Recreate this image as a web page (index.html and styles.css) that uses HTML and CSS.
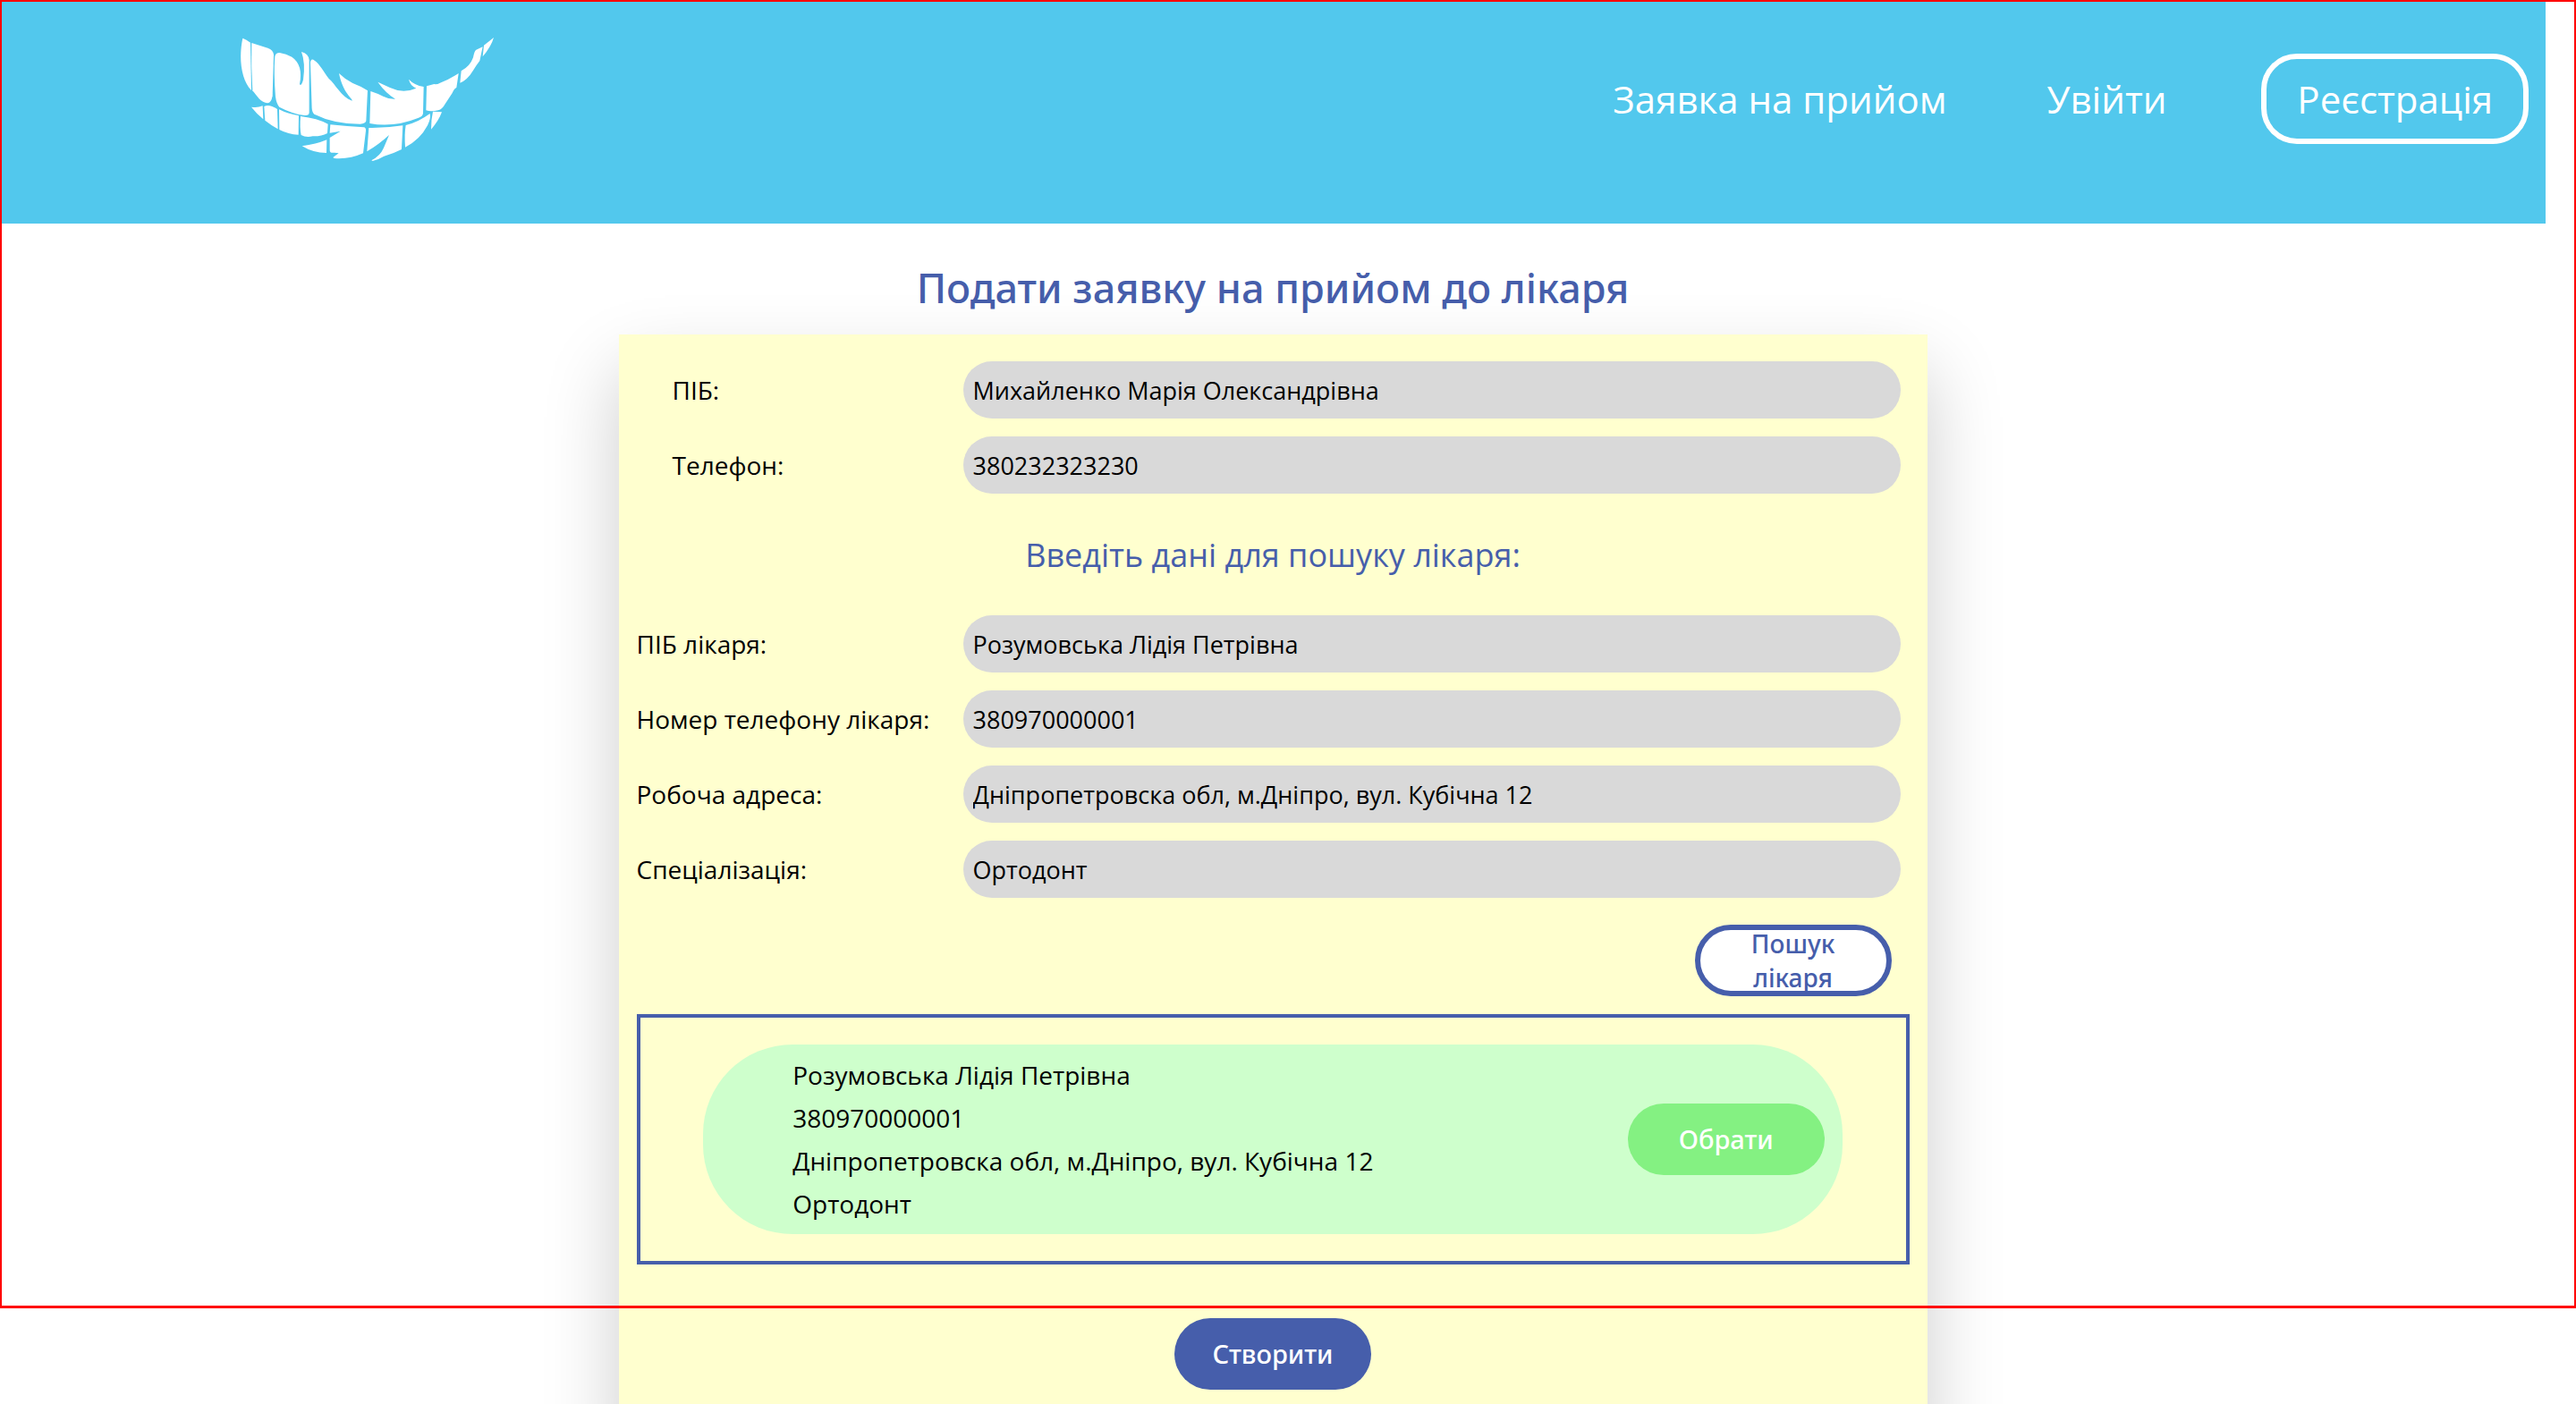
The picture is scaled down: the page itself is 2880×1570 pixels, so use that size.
FILE: index.html
```html
<!DOCTYPE html>
<html lang="uk">
<head>
<meta charset="utf-8">
<title>Подати заявку на прийом до лікаря</title>
<link rel="stylesheet" href="styles.css">
</head>
<body>
<div class="page">
  <header class="header">
    <a class="logo" href="#" aria-label="На головну">
      <svg class="logo-mark" viewBox="84 66 855 420" fill="#fff" aria-hidden="true">
        <path d="M94 68Q106 72 120 83L123 243C88 207 80 132 94 68Z"/>
        <path d="M124 84L178 101Q197 108 198 124L194 262Q190 285 177 286Q162 285 148 270L127 244Q122 165 124 84Z"/>
        <path d="M202 130Q204 117 218 117Q240 121 259 131Q298 158 285 222Q290 232 297 208Q305 150 291 114Q315 119 317 142L317 318Q317 328 302 327Q260 322 217 299Q207 288 204 264Q198 190 202 130Z"/>
        <path d="M321 150Q323 133 335 143C352 154 365 180 383 204C405 222 425 266 461 278C465 272 430 254 417 186Q437 206 463 219Q490 229 513 244L508 346Q506 355 488 356Q400 356 334 323Q327 317 326 302Z"/>
        <path d="M523 246Q545 253 565 263Q584 273 606 272Q574 253 547 215L588 234Q632 255 676 236Q656 228 651 206Q670 226 701 231L699 320Q698 330 684 335Q600 369 520 354Z"/>
        <path d="M711 229L736 222Q745 224 756 218Q785 207 818 186Q814 215 811 234Q803 237 797 252L771 292Q764 306 750 310Q725 316 709 310Z"/>
        <path d="M827 178Q857 162 867 133Q871 110 877 107L899 97L889 144Q878 158 868 175Q847 210 823 218Z"/>
        <path d="M903 92L936 66Q928 95 899 130Z"/>
        <path d="M123 299Q143 303 161 295L163 340Q142 323 123 299Z"/>
        <path d="M166 297Q182 288 210 306L212 373Q188 359 169 344Z"/>
        <path d="M216 307Q245 322 282 328L281 392Q247 391 217 375Z"/>
        <path d="M288 330Q345 337 380 356L378 387Q357 398 329 397Q306 402 290 393Q285 370 288 330Z"/>
        <path d="M388 358Q445 364 500 367Q508 368 507 379L498 454Q452 475 401 471L397 468L416 454L402 452Q386 455 386 443L386 402L422 380L386 386Z"/>
        <path d="M293 430Q340 424 376 409L375 453Q330 453 293 430Z"/>
        <path d="M517 369Q575 370 631 361L627 441Q600 455 568 464Q550 475 530 480L526 478Q555 464 567 436L585 393Q549 426 511 448Z"/>
        <path d="M641 360Q683 350 722 321Q726 336 714 361Q688 410 639 434Q636 390 641 360Z"/>
        <path d="M732 314L762 316Q752 344 726 374Q726 340 732 314Z"/>
      </svg>
    </a>
    <nav class="nav">
      <div class="nav-links">
        <a class="nav-link" href="#">Заявка на прийом</a>
        <a class="nav-link" href="#">Увійти</a>
      </div>
      <a class="nav-link nav-link-outlined" href="#">Реєстрація</a>
    </nav>
  </header>

  <main class="main">
    <h1 class="title">Подати заявку на прийом до лікаря</h1>
    <form class="card">
      <div class="field field-indented">
        <label for="name">ПІБ:</label>
        <input id="name" type="text" value="Михайленко Марія Олександрівна">
      </div>
      <div class="field field-indented">
        <label for="phone">Телефон:</label>
        <input id="phone" type="text" value="380232323230">
      </div>

      <h2 class="subtitle">Введіть дані для пошуку лікаря:</h2>

      <div class="field">
        <label for="doctor-name">ПІБ лікаря:</label>
        <input id="doctor-name" type="text" value="Розумовська Лідія Петрівна">
      </div>
      <div class="field">
        <label for="doctor-phone">Номер телефону лікаря:</label>
        <input id="doctor-phone" type="text" value="380970000001">
      </div>
      <div class="field">
        <label for="doctor-address">Робоча адреса:</label>
        <input id="doctor-address" type="text" value="Дніпропетровска обл, м.Дніпро, вул. Кубічна 12">
      </div>
      <div class="field">
        <label for="doctor-speciality">Спеціалізація:</label>
        <input id="doctor-speciality" type="text" value="Ортодонт">
      </div>

      <button class="button button-search" type="button"><span class="button-text">Пошук лікаря</span></button>

      <section class="results">
        <article class="doctor">
          <ul class="doctor-info">
            <li>Розумовська Лідія Петрівна</li>
            <li>380970000001</li>
            <li>Дніпропетровска обл, м.Дніпро, вул. Кубічна 12</li>
            <li>Ортодонт</li>
          </ul>
          <button class="button button-choose" type="button">Обрати</button>
        </article>
      </section>

      <button class="button button-create" type="submit">Створити</button>
    </form>
  </main>
</div>
<div class="frame"></div>
</body>
</html>
```
FILE: styles.css
```css
* {
  box-sizing: border-box;
}

body {
  position: relative;
  margin: 0;
  background: #fff;
  color: #000;
  font-family: "Open Sans", "Noto Sans", sans-serif;
  font-size: 28px;
  line-height: 38px;
}

.page {
  padding-right: 34px;
}

.header {
  display: flex;
  justify-content: space-between;
  align-items: flex-start;
  height: 250px;
  padding: 42px 19px 0 268px;
  background: #52c8ed;
}

.logo-mark {
  display: block;
  width: 285px;
  height: 140px;
}

.nav {
  display: flex;
  align-items: center;
  gap: 106px;
  padding-top: 18px;
}

.nav-links {
  display: flex;
  gap: 112px;
}

.nav-link {
  color: #fff;
  font-size: 42px;
  line-height: 58px;
  text-decoration: none;
}

.nav-link-outlined {
  padding: 16px 34px 15px;
  border: 6px solid #fff;
  border-radius: 40px;
}

.main {
  display: flex;
  flex-direction: column;
  align-items: center;
}

.title {
  margin: 40px 0 20px;
  color: #465eab;
  font-family: "Noto Sans", sans-serif;
  font-size: 45px;
  font-weight: 500;
  line-height: 64px;
}

.card {
  display: flex;
  flex-direction: column;
  gap: 20px;
  width: 1463px;
  max-width: 100%;
  padding: 30px 20px 60px;
  background: #ffffcf;
  box-shadow: 0 40px 80px rgba(0, 0, 0, 0.2);
}

.field {
  display: flex;
  align-items: center;
  justify-content: space-between;
  padding-right: 10px;
}

.field-indented {
  padding-left: 40px;
}

.field input {
  width: 1048px;
  height: 64px;
  padding: 0 11px;
  border: 0;
  border-radius: 32px;
  background: #d9d9d9;
  color: #000;
  font-family: inherit;
  font-size: 27px;
}

.subtitle {
  margin: 25px 0 23px;
  color: #465eab;
  font-size: 36px;
  font-weight: 400;
  line-height: 48px;
  text-align: center;
}

.button {
  width: 220px;
  height: 80px;
  padding: 0 20px;
  border: 0;
  border-radius: 40px;
  color: #fff;
  font-family: "Noto Sans", sans-serif;
  font-size: 29px;
  font-weight: 500;
  line-height: 38px;
}

.button-search {
  align-self: flex-end;
  margin: 10px 20px 0 0;
  border: 6px solid #465eab;
  background: #fff;
  color: #465eab;
  font-size: 28px;
  overflow: hidden;
}

.button-text {
  display: block;
  margin: -4px 0;
}

.results {
  padding: 30px 0;
  border: 4px solid #465eab;
}

.doctor {
  display: flex;
  align-items: center;
  justify-content: space-between;
  width: 90%;
  margin: 0 auto;
  padding: 10px 20px 10px 100px;
  border-radius: 100px;
  background: #ceffcc;
}

.doctor-info {
  margin: 0;
  padding: 0;
  list-style: none;
  line-height: 48px;
}

.button-choose {
  background: #84f182;
}

.button-create {
  align-self: center;
  margin-top: 40px;
  background: #465eab;
}

.frame {
  position: absolute;
  top: 0;
  right: 0;
  left: 0;
  height: 1463px;
  border: 2px solid #f00;
  border-bottom-width: 3px;
  pointer-events: none;
}
```
